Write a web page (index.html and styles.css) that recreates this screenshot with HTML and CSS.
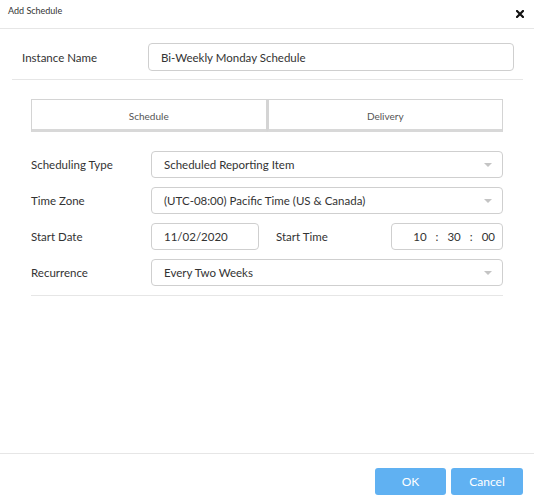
FILE: index.html
```html
<!DOCTYPE html>
<html>
<head>
<meta charset="utf-8">
<link rel="stylesheet" href="styles.css">
</head>
<body>
<div class="dialog">
  <div class="header">
    <span class="title">Add Schedule</span>
    <svg class="close" width="8" height="8" viewBox="0 0 8 8"><path d="M1 1 L7 7 M7 1 L1 7" stroke="#111" stroke-width="2.2" stroke-linecap="square"/></svg>
  </div>
  <div class="body">
    <div class="instance">
      <label class="inst-label">Instance Name</label>
      <div class="field inst-field">Bi-Weekly Monday Schedule</div>
    </div>
    <div class="section">
      <div class="tabs">
        <div class="tab">Schedule</div>
        <div class="tab">Delivery</div>
      </div>
      <div class="form">
        <div class="row">
          <label class="lbl">Scheduling Type</label>
          <div class="field select">Scheduled Reporting Item<span class="caret"></span></div>
        </div>
        <div class="row">
          <label class="lbl">Time Zone</label>
          <div class="field select">(UTC-08:00) Pacific Time (US &amp; Canada)<span class="caret"></span></div>
        </div>
        <div class="row">
          <label class="lbl">Start Date</label>
          <div class="field date">11/02/2020</div>
          <label class="lbl2">Start Time</label>
          <div class="field time"><span>10</span><span>:</span><span>30</span><span>:</span><span>00</span></div>
        </div>
        <div class="row">
          <label class="lbl">Recurrence</label>
          <div class="field select">Every Two Weeks<span class="caret"></span></div>
        </div>
      </div>
    </div>
  </div>
  <div class="footer">
    <button class="btn">OK</button>
    <button class="btn">Cancel</button>
  </div>
</div>
</body>
</html>
```
FILE: styles.css
```css
html, body { margin: 0; padding: 0; background: #fff; }
body { font-family: Lato, "Open Sans", sans-serif; color: #333; }
.dialog { width: 534px; height: 503px; display: flex; flex-direction: column; }
.header { height: 28px; border-bottom: 1px solid #e6e6e6; display: flex; align-items: flex-start; justify-content: space-between; padding: 0 10px 0 8px; }
.title { font-size: 9px; color: #333; margin-top: 5px; }
.close { margin-top: 10px; }
.body { flex: 1; }
.instance { margin: 14px 11px 0 12px; padding: 0 9px 8px 10px; height: 28px; border-bottom: 1px solid #e6e6e6; display: flex; align-items: center; }
.inst-label { width: 126px; font-size: 11.5px; color: #333; }
.field { box-sizing: border-box; height: 27px; border: 1px solid #cfcfcf; border-radius: 4px; font-size: 11.5px; color: #333; display: flex; align-items: center; padding: 0 12px; }
.inst-field { flex: 1; height: 28px; }
.section { margin: 19px 31px 0 31px; border-bottom: 1px solid #e6e6e6; padding-bottom: 9px; }
.tabs { display: flex; height: 33px; }
.tab { flex: 1; box-sizing: border-box; border: 1px solid #d4d4d4; border-bottom: 3px solid #d8d8d8; display: flex; align-items: center; justify-content: center; font-size: 10px; color: #555; padding-top: 2px; }
.tab + .tab { border-left: 2px solid #d4d4d4; }
.form { margin-top: 19px; display: flex; flex-direction: column; gap: 9px; }
.row { display: flex; align-items: center; }
.lbl { width: 120px; font-size: 11.5px; color: #333; }
.select { flex: 1; position: relative; }
.caret { position: absolute; right: 10px; top: 11px; width: 0; height: 0; border-left: 4px solid transparent; border-right: 4px solid transparent; border-top: 4px solid #c4c4c4; }
.date { width: 108px; }
.lbl2 { width: 115px; margin-left: 17px; font-size: 11.5px; color: #333; }
.time { flex: 1; justify-content: flex-end; gap: 9px; padding-right: 7px; }
.footer { box-sizing: border-box; height: 50px; border-top: 1px solid #e6e6e6; display: flex; justify-content: flex-end; align-items: flex-start; gap: 5px; padding: 14px 11px 0 0; }
.btn { width: 71px; height: 27px; border: none; border-radius: 3px; background: #60b1f2; color: #fff; font-family: Lato, sans-serif; font-size: 12px; padding: 0; }
.btn + .btn { width: 72px; }
```
